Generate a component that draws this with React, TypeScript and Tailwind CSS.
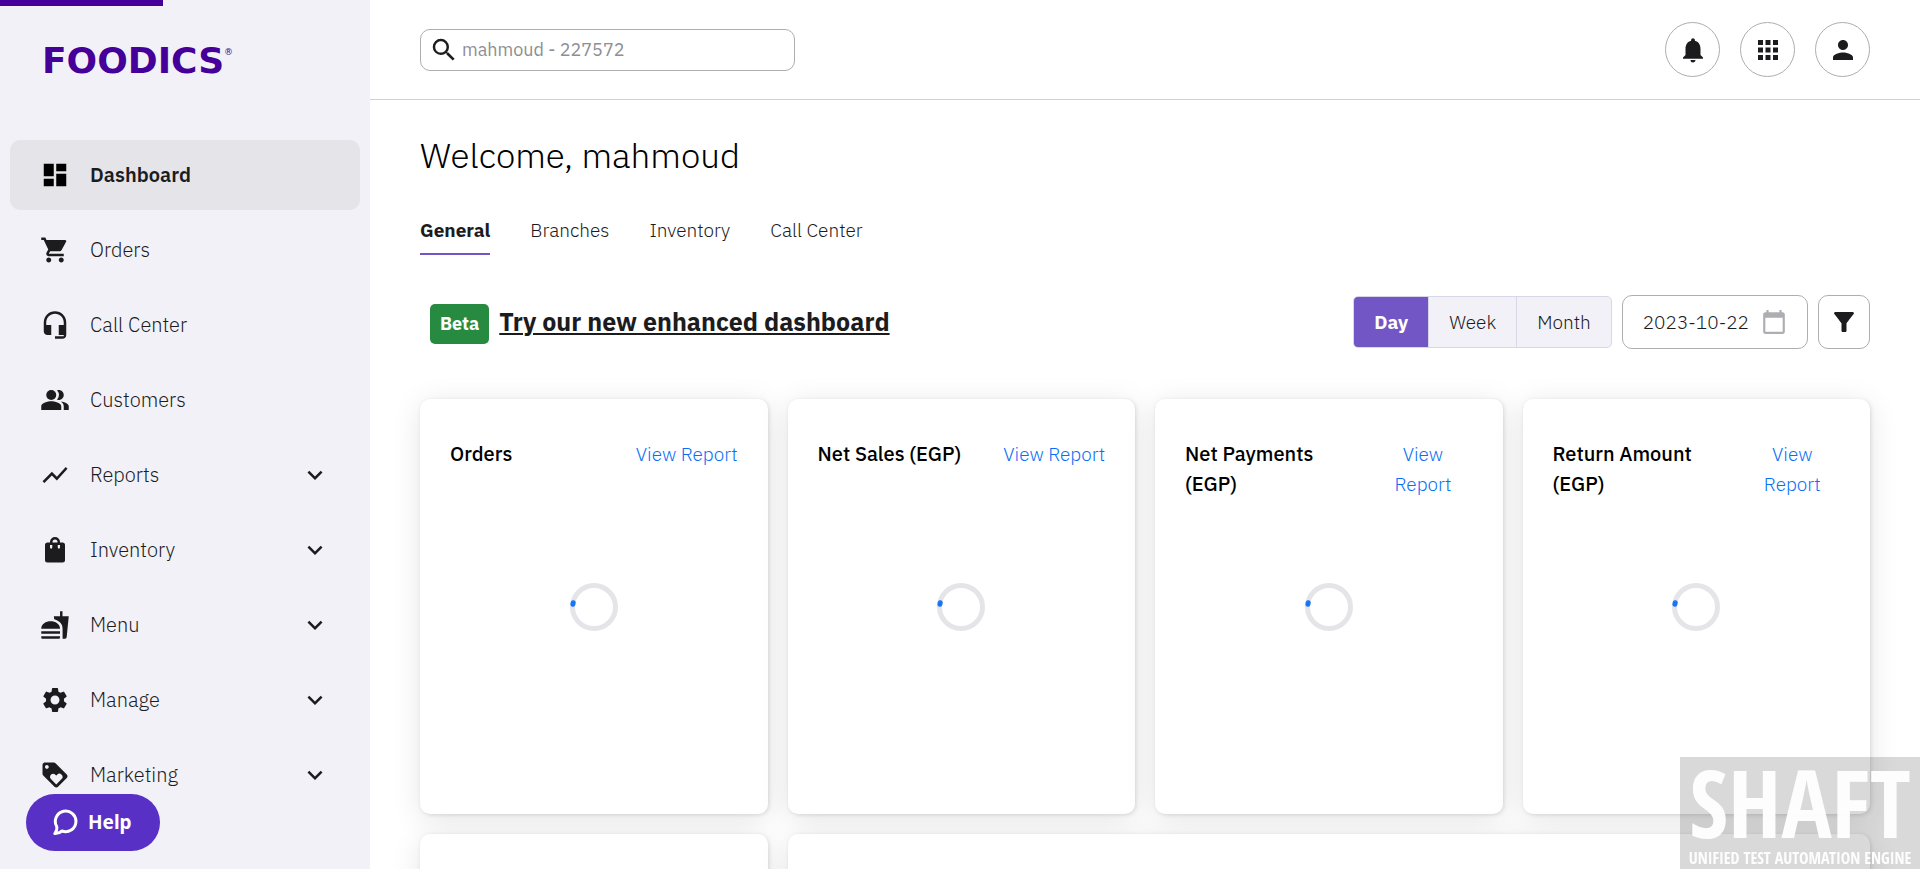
import type { IconType } from "react-icons";
import {
  MdApps,
  MdCalendarToday,
  MdDashboard,
  MdExpandMore,
  MdFastfood,
  MdFilterAlt,
  MdHeadsetMic,
  MdLoyalty,
  MdNotifications,
  MdPeopleAlt,
  MdPerson,
  MdSearch,
  MdSettings,
  MdShoppingCart,
  MdShowChart,
} from "react-icons/md";

const ShoppingBag = ({ size = 30 }: { size?: number }) => (
  <svg width={size} height={size} viewBox="0 0 24 24" fill="currentColor" aria-hidden="true">
    <path
      fillRule="evenodd"
      d="M12 1.6A4 4 0 0 0 8 5.6V6H6a2 2 0 0 0-2 2v12a2 2 0 0 0 2 2h12a2 2 0 0 0 2-2V8a2 2 0 0 0-2-2h-2v-.4a4 4 0 0 0-4-4zm0 2a2 2 0 0 1 2 2V6h-4v-.4a2 2 0 0 1 2-2zM8 8h1.8v2a.9.9 0 0 1-1.8 0zm6.2 0H16v2a.9.9 0 0 1-1.8 0z"
    />
  </svg>
);

type NavEntry = {
  label: string;
  icon: IconType | typeof ShoppingBag;
  expandable?: boolean;
  active?: boolean;
};

const NAV: NavEntry[] = [
  { label: "Dashboard", icon: MdDashboard, active: true },
  { label: "Orders", icon: MdShoppingCart },
  { label: "Call Center", icon: MdHeadsetMic },
  { label: "Customers", icon: MdPeopleAlt },
  { label: "Reports", icon: MdShowChart, expandable: true },
  { label: "Inventory", icon: ShoppingBag, expandable: true },
  { label: "Menu", icon: MdFastfood, expandable: true },
  { label: "Manage", icon: MdSettings, expandable: true },
  { label: "Marketing", icon: MdLoyalty, expandable: true },
];

function NavItem({ label, icon: Icon, expandable, active }: NavEntry) {
  const look = active ? "bg-[#e5e4e9] font-semibold text-black" : "font-light text-[#1c1c1e]";
  const cls = `flex h-[70px] w-full items-center gap-5 rounded-[10px] px-[30px] text-left text-[20px] ${look}`;
  const body = (
    <>
      <Icon size={30} />
      <span className="flex-1 text-[#1c1c1e]">{label}</span>
      {expandable && <MdExpandMore size={30} />}
    </>
  );
  return (
    <li>
      {expandable ? (
        <button type="button" className={cls}>
          {body}
        </button>
      ) : (
        <a href="#" className={cls}>
          {body}
        </a>
      )}
    </li>
  );
}

function Sidebar() {
  return (
    <aside className="w-[370px] shrink-0 bg-[#f2f1f7]">
      <div className="h-[140px] pt-10 pl-[42px]">
        <a href="#" className="flex items-start text-[#440099]">
          <span className="font-['DejaVu_Sans',sans-serif] text-[36px] leading-[42px] font-bold">FOODICS</span>
          <span className="pt-1 font-['DejaVu_Sans',sans-serif] text-[9px] leading-4">®</span>
        </a>
      </div>
      <nav className="px-[10px]">
        <ul className="flex flex-col gap-[5px]">
          {NAV.map((n) => (
            <NavItem key={n.label} {...n} />
          ))}
        </ul>
      </nav>
    </aside>
  );
}

function RoundButton({ label, icon: Icon }: { label: string; icon: IconType }) {
  return (
    <button
      type="button"
      aria-label={label}
      className="flex size-[55px] items-center justify-center rounded-full border border-[#aeaeb2] text-[#1c1c1e]"
    >
      <Icon size={30} />
    </button>
  );
}

function Header() {
  return (
    <header className="flex h-[100px] items-center justify-between border-b border-[#d1d1d1] px-[50px]">
      <label className="flex h-[42px] w-[375px] items-center gap-[3px] rounded-[10px] border border-[#aeaeb2] pl-2 text-[#1c1c1e]">
        <MdSearch size={30} />
        <input
          type="text"
          aria-label="Search"
          placeholder="mahmoud - 227572"
          className="min-w-0 flex-1 bg-transparent text-[18px] outline-none placeholder:text-[#8e8e93]"
        />
      </label>
      <div className="flex gap-5">
        <RoundButton label="Notifications" icon={MdNotifications} />
        <RoundButton label="Apps" icon={MdApps} />
        <RoundButton label="Account" icon={MdPerson} />
      </div>
    </header>
  );
}

function Tabs() {
  return (
    <nav className="mt-9 flex gap-10 text-[19px] leading-[30px] text-[#1c1c1e]">
      <a href="#" aria-current="page" className="border-b-2 border-[#7356c5] pb-2 font-bold">
        General
      </a>
      {["Branches", "Inventory", "Call Center"].map((t) => (
        <a key={t} href="#" className="border-b-2 border-transparent pb-2 font-light">
          {t}
        </a>
      ))}
    </nav>
  );
}

function Toolbar() {
  return (
    <div className="mt-10 flex items-center justify-between">
      <div className="flex items-center gap-[10px] pt-1 pl-[10px]">
        <span className="rounded-[5px] bg-[#268b40] px-[10px] text-[18px] leading-10 font-bold text-white">Beta</span>
        <a href="#" className="pb-1 text-[25px] leading-8 font-bold text-[#1c1c1e] underline decoration-2 underline-offset-2">
          Try our new enhanced dashboard
        </a>
      </div>
      <div className="flex items-center gap-[10px] text-[19px] font-light text-[#1c1c1e]">
        <div className="flex h-[52px] divide-x divide-[#d8d7e8] overflow-hidden rounded-[5px] border border-[#d8d7e8] bg-[#f2f1f7]">
          <button type="button" className="bg-[#7356c5] px-5 font-bold text-white">
            Day
          </button>
          <button type="button" className="px-5">
            Week
          </button>
          <button type="button" className="px-5">
            Month
          </button>
        </div>
        <button type="button" className="flex h-[54px] items-center gap-3 rounded-[10px] border border-[#aeaeb2] px-5">
          <span>2023-10-22</span>
          <MdCalendarToday size={26} color="#aeaeb2" />
        </button>
        <button
          type="button"
          aria-label="Filter"
          className="flex h-[54px] w-[52px] items-center justify-center rounded-[10px] border border-[#aeaeb2]"
        >
          <MdFilterAlt size={30} />
        </button>
      </div>
    </div>
  );
}

const CARD =
  "rounded-[10px] bg-white shadow-[0_5px_30px_rgba(0,0,0,0.1),1px_1px_4px_rgba(0,0,0,0.12)]";

function Spinner() {
  return (
    <svg width="48" height="48" viewBox="0 0 48 48" fill="none" role="status" aria-label="Loading">
      <circle cx="24" cy="24" r="21.5" stroke="#e5e4e9" strokeWidth="5" />
      <path d="M2.9 21.2 3.2 19.8" stroke="#1a75f5" strokeWidth="5" strokeLinecap="round" />
    </svg>
  );
}

function ReportCard({ title }: { title: string }) {
  return (
    <section className={`flex h-[415px] flex-col px-[30px] pt-10 pb-[100px] ${CARD}`}>
      <div className="flex h-[60px] items-start justify-between gap-2 leading-[30px]">
        <h2 className="text-[20px] font-medium text-black">{title}</h2>
        <a href="#" className="text-center text-[19px] font-light text-[#0a6ff5]">
          View Report
        </a>
      </div>
      <div className="flex flex-1 items-center justify-center">
        <Spinner />
      </div>
    </section>
  );
}

function Watermark() {
  return (
    <div className="pointer-events-none fixed right-0 bottom-0 flex h-28 w-60 flex-col items-center justify-end bg-black/15 font-['Open_Sans_Condensed','Roboto_Condensed',sans-serif] font-bold text-white/95">
      <span className="text-[94px] leading-[90px]">SHAFT</span>
      <span className="text-[16px] leading-[22px] whitespace-nowrap">UNIFIED TEST AUTOMATION ENGINE</span>
    </div>
  );
}

export default function App() {
  return (
    <div className="flex h-screen overflow-hidden bg-white font-['IBM_Plex_Sans',Roboto,sans-serif]">
      <Sidebar />
      <div className="min-w-0 flex-1">
        <Header />
        <main className="px-[50px] pt-[31px]">
          <h1 className="text-[35px] leading-[48px] font-light text-black">Welcome, mahmoud</h1>
          <Tabs />
          <Toolbar />
          <div className="mt-[50px] grid grid-cols-4 gap-5">
            <ReportCard title="Orders" />
            <ReportCard title="Net Sales (EGP)" />
            <ReportCard title="Net Payments (EGP)" />
            <ReportCard title="Return Amount (EGP)" />
            <section className={`h-[415px] ${CARD}`} />
            <section className={`col-span-3 h-[415px] ${CARD}`} />
          </div>
        </main>
      </div>
      <div className="fixed top-0 left-0 h-[6px] w-[163px] bg-[#440099]" />
      <button
        type="button"
        className="fixed bottom-[18px] left-[26px] flex h-[57px] w-[134px] items-center gap-[9px] rounded-full bg-[#5930c5] pl-[27px] font-['Noto_Sans',sans-serif] text-[19px] font-bold text-white"
      >
        <svg width="26" height="27" viewBox="0 0 26 27" fill="none" stroke="white" strokeWidth="3" strokeLinecap="round" strokeLinejoin="round" aria-hidden="true">
          <path d="M3.6 17.300A10.300 10.300 0 1 1 9 22C7 23.600 4.500 24.800 1.800 24.600 3.400 22.500 4.400 20 3.600 17.300Z" />
        </svg>
        Help
      </button>
      <Watermark />
    </div>
  );
}
